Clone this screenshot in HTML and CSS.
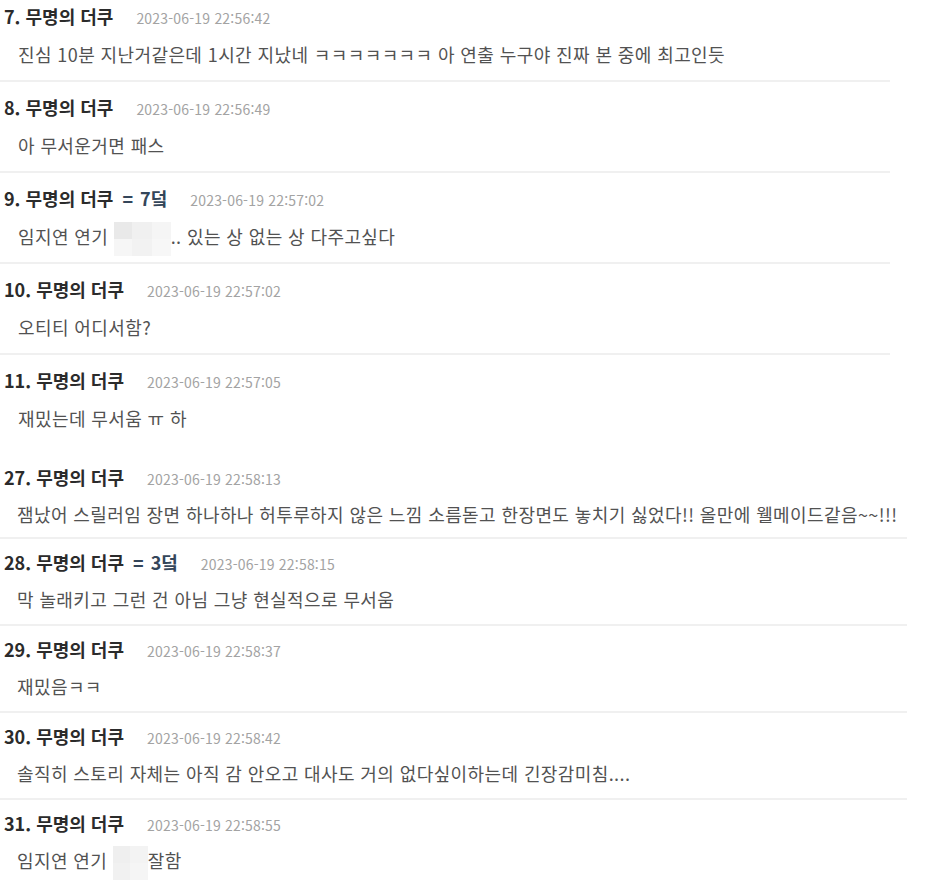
FILE: index.html
```html
<!DOCTYPE html>
<html lang="ko">
<head>
  <meta charset="UTF-8" />
  <meta name="viewport" content="width=device-width, initial-scale=1.0" />
  <title>댓글</title>
  <link rel="stylesheet" href="styles.css">
</head>
<body>
  <ul class="comments comments-a">
    <li class="comment">
      <div class="comment-head"><span class="name">7. 무명의 더쿠</span><span class="date">2023-06-19 22:56:42</span></div>
      <p class="comment-text">진심 10분 지난거같은데 1시간 지났네 ㅋㅋㅋㅋㅋㅋㅋ 아 연출 누구야 진짜 본 중에 최고인듯</p>
    </li>
    <li class="comment">
      <div class="comment-head"><span class="name">8. 무명의 더쿠</span><span class="date">2023-06-19 22:56:49</span></div>
      <p class="comment-text">아 무서운거면 패스</p>
    </li>
    <li class="comment">
      <div class="comment-head"><span class="name">9. 무명의 더쿠<span class="reply-to">= 7덬</span></span><span class="date">2023-06-19 22:57:02</span></div>
      <p class="comment-text">임지연 연기 <span class="mosaic mosaic-wide"></span>.. 있는 상 없는 상 다주고싶다</p>
    </li>
    <li class="comment">
      <div class="comment-head"><span class="name">10. 무명의 더쿠</span><span class="date">2023-06-19 22:57:02</span></div>
      <p class="comment-text">오티티 어디서함?</p>
    </li>
    <li class="comment">
      <div class="comment-head"><span class="name">11. 무명의 더쿠</span><span class="date">2023-06-19 22:57:05</span></div>
      <p class="comment-text">재밌는데 무서움 ㅠ 하</p>
    </li>
  </ul>

  <ul class="comments comments-b">
    <li class="comment">
      <div class="comment-head"><span class="name">27. 무명의 더쿠</span><span class="date">2023-06-19 22:58:13</span></div>
      <p class="comment-text">잼났어 스릴러임 장면 하나하나 허투루하지 않은 느낌 소름돋고 한장면도 놓치기 싫었다!! 올만에 웰메이드같음~~!!!</p>
    </li>
    <li class="comment">
      <div class="comment-head"><span class="name">28. 무명의 더쿠<span class="reply-to">= 3덬</span></span><span class="date">2023-06-19 22:58:15</span></div>
      <p class="comment-text">막 놀래키고 그런 건 아님 그냥 현실적으로 무서움</p>
    </li>
    <li class="comment">
      <div class="comment-head"><span class="name">29. 무명의 더쿠</span><span class="date">2023-06-19 22:58:37</span></div>
      <p class="comment-text">재밌음ㅋㅋ</p>
    </li>
    <li class="comment">
      <div class="comment-head"><span class="name">30. 무명의 더쿠</span><span class="date">2023-06-19 22:58:42</span></div>
      <p class="comment-text">솔직히 스토리 자체는 아직 감 안오고 대사도 거의 없다싶이하는데 긴장감미침....</p>
    </li>
    <li class="comment">
      <div class="comment-head"><span class="name">31. 무명의 더쿠</span><span class="date">2023-06-19 22:58:55</span></div>
      <p class="comment-text">임지연 연기 <span class="mosaic mosaic-narrow"></span>잘함</p>
    </li>
  </ul>
</body>
</html>
```

FILE: styles.css
```css
body {
  margin: 0;
  background-color: #ffffff;
  font-family: "Noto Sans CJK KR", "Noto Sans", sans-serif;
  color: #444444;
}
.comments {
  list-style: none;
  margin: 0;
  padding: 0;
}
.comments-a {
  width: 890px;
}
.comments-b {
  width: 907px;
  margin-top: 10px;
}
.comment {
  border-bottom: 2px solid #f0f0f0;
}
.comment:last-child {
  border-bottom: none;
}
.comments-a .comment {
  padding: 13px 0 14px;
}
.comments-a .comment:first-child {
  padding: 4px 0 14px;
}
.comments-b .comment {
  padding: 11px 0 13px;
}
.comments-b .comment:first-child {
  padding-bottom: 11px;
}
.comment-head {
  display: flex;
  align-items: baseline;
  gap: 23px;
  height: 24px;
  line-height: 24px;
  padding-left: 4px;
}
.name {
  font-size: 18px;
  font-weight: bold;
  color: #2b2b2b;
}
.reply-to {
  color: #34465a;
  margin-left: 9px;
  word-spacing: 2px;
}
.date {
  font-size: 14px;
  letter-spacing: 0.2px;
  color: #a3a3a3;
}
.comment-text {
  margin: 14px 0 0;
  padding-left: 18px;
  height: 24px;
  font-size: 18px;
  letter-spacing: 0.4px;
  line-height: 24px;
  color: #525252;
}
.comments-b .comment-text {
  margin-top: 13px;
  padding-left: 17px;
}
.mosaic {
  display: inline-block;
  vertical-align: middle;
  margin: -8px 0;
  height: 34px;
}
.mosaic-wide {
  width: 57px;
  background:
    linear-gradient(to right, #e9e9e9 0 18px, #f0f0f0 18px 38px, #f5f5f5 38px) top / 100% 50% no-repeat,
    linear-gradient(to right, #f6f6f6 0 18px, #f2f2f2 18px 38px, #f7f7f7 38px) bottom / 100% 50% no-repeat;
}
.mosaic-narrow {
  width: 35px;
  background:
    linear-gradient(to right, #efefef 0 17px, #f3f3f3 17px) top / 100% 50% no-repeat,
    linear-gradient(to right, #f1f1f1 0 17px, #f5f5f5 17px) bottom / 100% 50% no-repeat;
}
```
